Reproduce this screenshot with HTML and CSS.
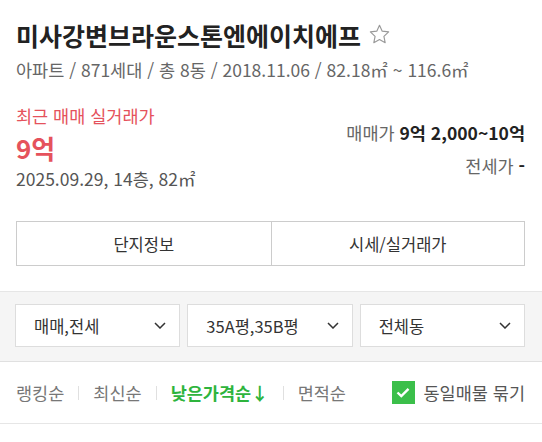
FILE: index.html
```html
<!DOCTYPE html>
<html lang="ko">
<head>
  <meta charset="UTF-8">
  <meta name="viewport" content="width=device-width, initial-scale=1.0">
  <title>미사강변브라운스톤엔에이치에프</title>
  <link rel="stylesheet" href="styles.css">
</head>
<body>
  <div class="summary">
    <h1 class="title">
      미사강변브라운스톤엔에이치에프
      <svg class="star" width="21" height="20" viewBox="0 0 20 19">
        <path d="M10 1.2l2.6 5.6 6.1.7-4.5 4.2 1.2 6.1L10 14.8l-5.4 3 1.2-6.1L1.3 7.5l6.1-.7z" fill="none" stroke="#999" stroke-width="1.1" stroke-linejoin="round"/>
      </svg>
    </h1>
    <div class="info">아파트 / 871세대 / 총 8동 / 2018.11.06 / 82.18㎡ ~ 116.6㎡</div>

    <div class="prices">
      <div class="recent">
        <div class="recent-label">최근 매매 실거래가</div>
        <div class="recent-price">9억</div>
        <div class="recent-date">2025.09.29, 14층, 82㎡</div>
      </div>
      <div class="ranges">
        <div class="range">매매가 <b>9억 2,000~10억</b></div>
        <div class="range">전세가 <b>-</b></div>
      </div>
    </div>

    <div class="tabs">
      <button class="tab">단지정보</button>
      <button class="tab">시세/실거래가</button>
    </div>
  </div>

  <div class="filters">
    <div class="select">매매,전세 <svg class="chev" width="12" height="7" viewBox="0 0 12 7"><path d="M1 1l5 5 5-5" fill="none" stroke="#333" stroke-width="1.5"/></svg></div>
    <div class="select">35A평,35B평 <svg class="chev" width="12" height="7" viewBox="0 0 12 7"><path d="M1 1l5 5 5-5" fill="none" stroke="#333" stroke-width="1.5"/></svg></div>
    <div class="select">전체동 <svg class="chev" width="12" height="7" viewBox="0 0 12 7"><path d="M1 1l5 5 5-5" fill="none" stroke="#333" stroke-width="1.5"/></svg></div>
  </div>

  <div class="sortbar">
    <ul class="sorts">
      <li>랭킹순</li>
      <li>최신순</li>
      <li class="active">낮은가격순↓</li>
      <li>면적순</li>
    </ul>
    <label class="group">
      <span class="check">
        <svg width="14" height="11" viewBox="0 0 14 11"><path d="M1.5 5.5l3.8 3.6L12.5 1.8" fill="none" stroke="#fff" stroke-width="2.4"/></svg>
      </span>
      동일매물 묶기
    </label>
  </div>
</body>
</html>
```

FILE: styles.css
```css
body {
  margin: 0;
  font-family: "Noto Sans CJK KR", "Noto Sans", sans-serif;
  background-color: #fff;
  color: #222;
}
.summary {
  padding: 15px 17px 25px 16px;
}
.title {
  display: flex;
  align-items: center;
  gap: 8px;
  margin: 0;
  font-size: 25px;
  font-weight: 700;
  line-height: 40px;
}
.star {
  margin-top: -2px;
}
.info {
  font-size: 17.5px;
  line-height: 24px;
  color: #666;
  margin-top: 3px;
}
.prices {
  display: flex;
  justify-content: space-between;
  margin-top: 22px;
}
.recent-label {
  font-size: 17.5px;
  line-height: 24px;
  color: #e5525c;
}
.recent-price {
  font-size: 26px;
  font-weight: 700;
  line-height: 36px;
  color: #e5525c;
  margin-top: 2px;
}
.recent-date {
  font-size: 17.5px;
  line-height: 24px;
  color: #555;
  margin-top: 1px;
}
.ranges {
  text-align: right;
  padding-top: 17px;
}
.range {
  font-size: 17.5px;
  line-height: 24px;
  color: #666;
  margin-bottom: 9px;
}
.range b {
  color: #222;
}
.tabs {
  display: grid;
  grid-template-columns: 1fr 1fr;
  margin-top: 30px;
  border: 1px solid #ccc;
}
.tab {
  height: 43px;
  border: none;
  background: #fff;
  font-family: inherit;
  font-size: 16.5px;
  color: #333;
  padding: 0;
}
.tab + .tab {
  border-left: 1px solid #ccc;
}
.filters {
  display: grid;
  grid-template-columns: repeat(3, 1fr);
  gap: 7px;
  padding: 12px 17px 14px 15px;
  background-color: #f5f5f5;
  border-top: 1px solid #e6e6e6;
  border-bottom: 1px solid #e0e0e0;
}
.select {
  display: flex;
  align-items: center;
  justify-content: space-between;
  height: 41px;
  padding: 0 13px 0 18px;
  background: #fff;
  border: 1px solid #ddd;
  font-size: 16.5px;
  color: #333;
}
.sortbar {
  display: flex;
  justify-content: space-between;
  align-items: center;
  height: 61px;
  padding: 0 17px 0 16px;
  border-bottom: 1px solid #e6e6e6;
}
.sorts {
  display: flex;
  margin: 0;
  padding: 0;
  list-style: none;
  font-size: 17.5px;
  color: #777;
}
.sorts li {
  line-height: 14px;
}
.sorts li + li {
  margin-left: 14px;
  padding-left: 14px;
  border-left: 1px solid #e0e0e0;
}
.sorts .active {
  color: #2eb43d;
  font-weight: 700;
}
.group {
  display: flex;
  align-items: center;
  gap: 9px;
  font-size: 17.5px;
  color: #555;
}
.check {
  display: flex;
  align-items: center;
  justify-content: center;
  width: 23px;
  height: 23px;
  background-color: #3bbf4a;
}
```
